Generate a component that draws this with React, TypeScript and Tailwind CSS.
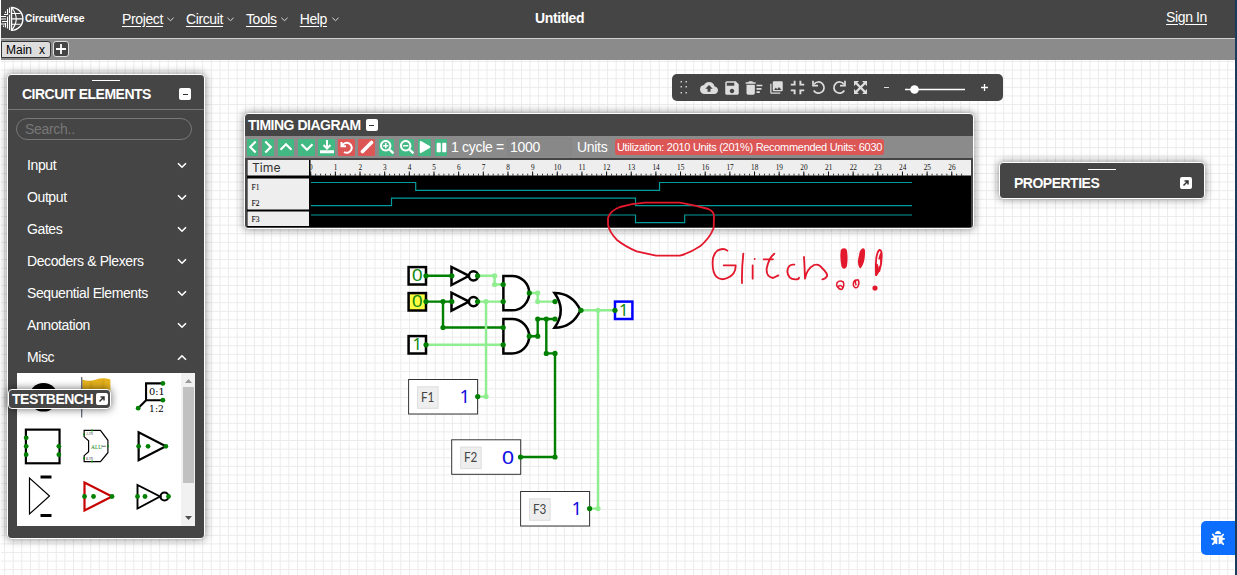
import React from "react";
import { FaBug, FaPause, FaPlay, FaSearchMinus, FaSearchPlus } from "react-icons/fa";
import { MdCloudUpload, MdDeleteSweep, MdFullscreenExit, MdPhotoLibrary, MdSave } from "react-icons/md";

const FONT = "font-['Liberation_Sans',Arial,sans-serif]";
const DARK = "#008000";
const LIGHT = "#90ee90";

function Logo() {
  return (
    <div className="flex items-center">
      <svg width="23" height="28" viewBox="0 0 23 28" fill="none" stroke="#fff" strokeWidth="1.1">
        <path d="M10.5 2.5A11.2 11.2 0 0 1 10.5 25.3Z" strokeWidth="1.4" />
        <path d="M10.5 2.5Q20 13.9 10.5 25.3M10.5 8.5H19.5M10.5 13.9H21.5M10.5 19.3H19.5" />
        <path d="M8.5 2.5V8M6.5 4V9.5H3M8.5 9.5V25M6.5 11.5V23.5M0 11.5H5M0 14H5M1 16.5H6M4.5 6.5V8M0 19H4M4.5 18V22.5M2.5 20.5V22" />
      </svg>
      <span className="ml-px font-['Inter',sans-serif] text-[9.8px] font-bold text-white">CircuitVerse</span>
    </div>
  );
}

function Header() {
  return (
    <header className="flex h-[38px] shrink-0 bg-[#454545] text-[14px] tracking-[-0.38px] text-white">
      <div className="flex w-[121px] items-center tracking-normal">
        <Logo />
      </div>
      <nav className="flex w-[413px] items-center gap-[11.5px] pt-px">
        {["Project", "Circuit", "Tools", "Help"].map((m) => (
          <span key={m} className="flex items-center gap-[4.5px]">
            <span className="underline underline-offset-2">{m}</span>
            <svg width="7" height="5" viewBox="0 0 7 5" fill="none" stroke="#ddd" strokeWidth="1">
              <path d="M0.4 0.8 3.5 3.7 6.6 0.8" />
            </svg>
          </span>
        ))}
      </nav>
      <div className="flex-1 pt-[9px] leading-[18px] font-bold">Untitled</div>
      <a className="mr-[28px] pt-2 leading-[18px] underline underline-offset-2">Sign In</a>
    </header>
  );
}

function TabBar() {
  return (
    <div className="flex h-[22px] shrink-0 items-start border-t border-[#d0d0d0] bg-[#8b8b8b] pt-[2px]">
      <div className="flex h-[17px] w-[50px] items-center justify-between rounded-r-[3px] border border-[#333] bg-[#ddd] pr-[5px] pl-1 text-[12px] text-black">
        <span>Main</span>
        <span>x</span>
      </div>
      <div className="ml-[2px] flex size-[16px] items-center justify-center rounded-[3px] border border-[#ddd] bg-[#454545]">
        <svg width="10" height="10" viewBox="0 0 10 10" stroke="#fff" strokeWidth="1.8">
          <path d="M5 0V10M0 5H10" />
        </svg>
      </div>
    </div>
  );
}

function Wire({ d, on }: { d: string; on?: boolean }) {
  return <path d={d} fill="none" stroke={on ? LIGHT : DARK} strokeWidth="2.4" />;
}

function Dots({ pts, on }: { pts: number[][]; on?: boolean }) {
  return (
    <g fill={on ? LIGHT : DARK}>
      {pts.map(([x, y]) => (
        <circle key={`${x}-${y}`} cx={x} cy={y} r="2.6" />
      ))}
    </g>
  );
}

function Bit({ x, y, v, fill, stroke = "#000" }: { x: number; y: number; v: string; fill: string; stroke?: string }) {
  const w = v === "0" ? 11 : 9.5;
  return (
    <g>
      <rect x={x - 8.7} y={y - 8.7} width="17.4" height="17.4" fill={fill} stroke={stroke} strokeWidth="2.5" />
      <text
        x={x - w / 2}
        y={y + 5.5}
        fontSize="16"
        fontFamily="'Noto Sans',sans-serif"
        fill="#118811"
        textLength={w}
        lengthAdjust="spacingAndGlyphs"
      >
        {v}
      </text>
    </g>
  );
}

function Flag({ x, y, name, v }: { x: number; y: number; name: string; v: string }) {
  return (
    <g fontFamily="'Noto Sans',sans-serif">
      <rect x={x} y={y} width="69" height="34.5" fill="#fff" stroke="#333" strokeWidth="1" />
      <rect x={x + 9} y={y + 7.3} width="20.5" height="21.5" fill="#eee" stroke="#ddd" strokeWidth="1" />
      <text
        x={x + 12.3}
        y={y + 22}
        fontSize="12.5"
        fill="#444"
        fontFamily="Lato,sans-serif"
        textLength="13.4"
        lengthAdjust="spacingAndGlyphs"
      >
        {name}
      </text>
      <text
        x={v === "0" ? x + 50 : x + 51}
        y={y + 23.8}
        fontSize="18"
        fill="#1010e0"
        textLength={v === "0" ? 12.5 : 10.5}
        lengthAdjust="spacingAndGlyphs"
      >
        {v}
      </text>
    </g>
  );
}

function CircuitCanvas() {
  return (
    <svg className="block" width="1233" height="515" viewBox="1 60 1233 515">
      <defs>
        <pattern id="grid" x="4.1" y="0.7" width="8.614" height="8.614" patternUnits="userSpaceOnUse">
          <path d="M0 0.5H8.7M0.5 0V8.7" stroke="#ebebeb" strokeWidth="1" fill="none" />
        </pattern>
      </defs>
      <rect x="1" y="60" width="1233" height="515" fill="#fff" />
      <rect x="1" y="60" width="1233" height="515" fill="url(#grid)" />

      <g fill="#fff" stroke="#000" strokeWidth="2.5">
        <path d="M451.5 267V285L469 275.8Z" />
        <path d="M451.5 292.7V310.7L469 301.6Z" />
        <circle cx="473.5" cy="275.8" r="4.6" />
        <circle cx="473.5" cy="301.6" r="4.6" />
        <path d="M503.4 275.9H512A17.2 17.2 0 0 1 512 310.3H503.4Z" />
        <path d="M503.4 319H512A17.2 17.2 0 0 1 512 353.4H503.4Z" />
        <path d="M554.5 293C567 293 575 299 580.5 310.3C575 322 567 327.8 554.5 327.8Q567 310.3 554.5 293Z" />
      </g>

      <Wire d="M426 275.8H451.5M426 301.6H451.5M443 301.6V327.5H503" />
      <Wire d="M529 336.2H537.7V319H555M546.3 319V353.4H555V457H520.5" />
      <Wire on d="M477.6 275.8H494.6V284.5H503M477.6 301.6H503M486 301.6V396.6H478" />
      <Wire on d="M426 344.8H503M529 293H537.7V301.6H555M581 310.3H615M598 310.3V508.6H589.5" />
      <Dots on pts={[[494.6, 275.8], [494.6, 284.5], [486, 301.6], [486, 396.6], [537.7, 293], [537.7, 301.6], [598, 310.3], [598, 508.6]]} />

      <Bit x={417.3} y={275.8} v="0" fill="#fff" />
      <Bit x={417.3} y={301.8} v="0" fill="#ffff44" />
      <Bit x={417.3} y={344.8} v="1" fill="#fff" />
      <Bit x={623.7} y={310.3} v="1" fill="#fff" stroke="#0000ff" />
      <Flag x={408.6} y={379.5} name="F1" v="1" />
      <Flag x={451.7} y={439.8} name="F2" v="0" />
      <Flag x={520.6} y={491.5} name="F3" v="1" />
      <Dots
        pts={[
          [426, 275.8], [426, 301.6], [426, 344.8], [451.8, 275.8], [451.8, 301.6], [443, 301.6], [443, 327.5],
          [477.6, 275.8], [477.6, 301.6], [503.2, 284.5], [503.2, 301.6], [503.2, 327.5], [503.2, 344.8],
          [529.3, 293], [529.3, 336.2], [537.7, 336.2], [537.7, 319], [546.3, 319], [555, 319], [555, 301.6],
          [546.3, 353.4], [555, 353.4], [581, 310.3], [615, 310.3], [555, 457], [520.5, 457], [477.7, 396.6], [589.6, 508.6],
        ]}
      />
    </svg>
  );
}

function CollapseBox() {
  return (
    <span className="flex size-[12px] items-center justify-center rounded-[2px] bg-white">
      <span className="h-px w-[5px] bg-[#333]" />
    </span>
  );
}

function ExpandBox() {
  return (
    <span className="flex size-[12px] shrink-0 items-center justify-center rounded-[2px] bg-white">
      <svg width="8" height="8" viewBox="0 0 8 8" fill="none" stroke="#333" strokeWidth="1.5">
        <path d="M1.5 6.5 5.5 2.5M2.5 2H6V5.5" />
      </svg>
    </span>
  );
}

function Pins({ pts, r = 2.4 }: { pts: number[][]; r?: number }) {
  return (
    <g fill={DARK} stroke="none">
      {pts.map(([x, y]) => (
        <circle key={`${x}-${y}`} cx={x} cy={y} r={r} />
      ))}
    </g>
  );
}

function MiscItems() {
  const cell = "block size-full";
  return (
    <div className="grid flex-1 grid-cols-[54px_54px_54px] grid-rows-[49.5px_49.5px_50px]">
      <svg className={cell} viewBox="0 0 54 50">
        <circle cx="26.5" cy="24.5" r="14.5" />
      </svg>
      <svg className={cell} viewBox="0 0 54 50">
        <path d="M11 6.500Q18 9 25 6.500T39.500 6.500V27Q32 26 25 28T11 27Z" fill="#e6b31e" />
        <path d="M20 8V28M32 6V27" stroke="#d5a313" strokeWidth="3" opacity=".5" />
        <path d="M10.500 4V45" stroke="#6b7080" strokeWidth="1.400" />
      </svg>
      <svg className={cell} viewBox="0 0 54 50" fill="none" stroke="#000" strokeWidth="2.100">
        <path d="M37.500 10.500H21V27.500H37.500M21 27.500 13 35.500" />
        <Pins pts={[[38, 10.5], [38, 27.5], [13, 35.5]]} />
        <g fill="#000" stroke="none" fontFamily="'DejaVu Serif',serif" fontSize="9.500">
          <text x="24" y="22.500" textLength="16" lengthAdjust="spacingAndGlyphs">0:1</text>
          <text x="24" y="39" textLength="15" lengthAdjust="spacingAndGlyphs">1:2</text>
        </g>
      </svg>
      <svg className={cell} viewBox="0 0 54 50" fill="none" stroke="#000" strokeWidth="2.200">
        <rect x="8.700" y="7.700" width="34" height="34" />
        <Pins pts={[[9, 16], [9, 24.5], [9, 33], [42, 24.5], [42, 33]]} />
      </svg>
      <svg className={cell} viewBox="0 0 54 50" fill="none" stroke="#000" strokeWidth="1.200">
        <path d="M13 8.500H29.500L37 18.500V31L29.500 40H13V34L17.500 30V19L13 15Z" />
        <Pins r={1} pts={[[21, 8.5], [21, 40], [13, 12.5], [13, 36.5], [37, 24.5]]} />
        <text x="20" y="27" fontSize="5.500" fill={DARK} stroke="none" fontFamily="'Liberation Serif',serif">ALU</text>
        <text x="15" y="13.500" fontSize="3.500" fill="#333" stroke="none" fontFamily="'Liberation Serif',serif">A IN</text>
        <text x="15" y="38" fontSize="3.500" fill="#333" stroke="none" fontFamily="'Liberation Serif',serif">B IN</text>
        <path d="M31 24.500H35" strokeWidth=".6" />
      </svg>
      <svg className={cell} viewBox="0 0 54 50" fill="none" stroke="#000" strokeWidth="2.200">
        <path d="M13.500 10.500V38.500L41 24.500Z" />
        <Pins pts={[[13.5, 24.5], [23, 24.5], [41, 24.5]]} />
      </svg>
      <svg className={cell} viewBox="0 0 54 50" fill="none" stroke="#000" strokeWidth="1.200">
        <path d="M12.500 6V42L32.500 24Z" />
        <path d="M23.500 5H34.500M23.500 43.500H34.500" strokeWidth="3" />
      </svg>
      <svg className={cell} viewBox="0 0 54 50" fill="none" stroke="#c80000" strokeWidth="2.200">
        <path d="M13.500 10.500V38.500L41 24.500Z" />
        <Pins pts={[[13.5, 24.5], [22.5, 24.5], [41, 24.5]]} />
      </svg>
      <svg className={cell} viewBox="0 0 54 50" fill="none" stroke="#000" strokeWidth="1.900">
        <path d="M12.500 13V36.500L35 24.500Z" />
        <circle cx="39.500" cy="24.500" r="4" strokeWidth="2.200" />
        <Pins pts={[[12.5, 24.5], [20, 24.5], [43.5, 24.5]]} />
      </svg>
    </div>
  );
}

function ElementsPanel() {
  const rows = ["Input", "Output", "Gates", "Decoders & Plexers", "Sequential Elements", "Annotation", "Misc"];
  return (
    <aside className="absolute top-[74px] left-[7px] flex h-[465px] w-[198px] flex-col rounded-[4px] border border-white bg-[#454545] text-white shadow-[0_0_8px_rgba(0,0,0,0.5)]">
      <div className="flex h-[35px] shrink-0 flex-col border-b border-[#777]">
        <div className="mt-[5px] ml-[84px] h-px w-[28px] bg-white" />
        <div className="mt-[5px] flex items-center justify-between pr-[13px] pl-[14px]">
          <span className="text-[14px] leading-[16px] font-bold tracking-[-0.5px]">CIRCUIT ELEMENTS</span>
          <CollapseBox />
        </div>
      </div>
      <div className="mx-2 mt-2 mr-3 flex h-[22px] shrink-0 items-center rounded-full border border-[#777] pl-2 text-[14px] tracking-[-0.3px] text-[#777]">
        Search..
      </div>
      <div className="mt-[9px] flex flex-col">
        {rows.map((r, i) => (
          <div key={r} className="flex h-[32.1px] items-center justify-between pr-[17px] pl-[19px] text-[14px] tracking-[-0.4px]">
            <span>{r}</span>
            <svg
              className={i === 6 ? "rotate-180" : ""}
              width="10"
              height="7"
              viewBox="0 0 10 7"
              fill="none"
              stroke="#fff"
              strokeWidth="1.6"
            >
              <path d="M1 1.200 5 5.200 9 1.200" />
            </svg>
          </div>
        ))}
      </div>
      <div className="mx-[9px] -mt-px flex h-[153px] bg-white">
        <MiscItems />
        <div className="flex w-[14px] flex-col items-center bg-[#f1f1f1] py-[6px]">
          <svg width="7" height="4" viewBox="0 0 7 4" fill="#999">
            <path d="M0 4 3.500 0 7 4Z" />
          </svg>
          <div className="mt-1 h-[96px] w-[11px] bg-[#c1c1c1]" />
          <svg className="mt-auto" width="7" height="4" viewBox="0 0 7 4" fill="#505050">
            <path d="M0 0 3.500 4 7 0Z" />
          </svg>
        </div>
      </div>
    </aside>
  );
}

function TestBench() {
  return (
    <div className="absolute top-[389px] left-[8px] flex h-[20px] w-[103px] items-center gap-[3px] rounded-[4px] border border-white bg-[#454545] pl-[3px] text-white shadow-[0_0_8px_rgba(0,0,0,0.6)]">
      <span className="text-[14px] leading-[16px] font-bold tracking-[-0.5px]">TESTBENCH</span>
      <ExpandBox />
    </div>
  );
}

function PropertiesPanel() {
  return (
    <div className="absolute top-[162px] left-[999px] flex h-[37px] w-[206px] flex-col rounded-[4px] border border-white bg-[#454545] text-white shadow-[0_0_8px_rgba(0,0,0,0.5)]">
      <div className="mt-[6px] ml-[88px] h-px w-[28px] bg-white" />
      <div className="mt-[5px] flex items-center justify-between pr-3 pl-[14px]">
        <span className="text-[14px] leading-[16px] font-bold tracking-[-0.5px]">PROPERTIES</span>
        <ExpandBox />
      </div>
    </div>
  );
}

function RotateArrow({ flip }: { flip?: boolean }) {
  return (
    <svg className={flip ? "-scale-x-100" : ""} width="14" height="15" viewBox="0 0 14 15" fill="none" stroke="currentColor" strokeWidth="1.700">
      <path d="M2 4.200A5.600 5.600 0 1 1 1.700 10.500" />
      <path d="M1 .8V5.700H6" />
    </svg>
  );
}

function QuickBar() {
  return (
    <div className="absolute top-[74px] left-[672px] flex h-[27px] w-[331px] items-center rounded-[5px] bg-[#454545] pl-[7px] text-[#ddd]">
      <svg width="9" height="15" viewBox="0 0 9 15" fill="#ccc">
        {[1, 6, 12].map((y) => (
          <path key={y} d={`M1.500 ${y}h1.500v1.500h-1.500zM6.500 ${y}h1.500v1.500h-1.500z`} />
        ))}
      </svg>
      <MdCloudUpload className="ml-[12px]" size={18} />
      <MdSave className="ml-[5px]" size={18} />
      <MdDeleteSweep className="ml-[3px]" size={20} />
      <MdPhotoLibrary className="ml-[5px]" size={15} />
      <MdFullscreenExit className="ml-[2px]" size={23} />
      <span className="ml-[3px]"><RotateArrow /></span>
      <span className="ml-[6px]"><RotateArrow flip /></span>
      <svg className="ml-[8px]" width="13" height="13" viewBox="0 0 13 13" fill="currentColor">
        <path d="M0 0H5L0 5ZM13 0H8L13 5ZM0 13H5L0 8ZM13 13H8L13 8Z" />
        <path d="M2 2 11 11M11 2 2 11" stroke="currentColor" strokeWidth="2.400" />
      </svg>
      <span className="ml-[17px] h-[1.5px] w-[5px] bg-[#ddd]" />
      <svg className="ml-[16px]" width="60" height="12" viewBox="0 0 60 12">
        <path d="M0 7.500H60" stroke="#fff" strokeWidth="1.300" />
        <circle cx="9.500" cy="7.500" r="4.300" fill="#fff" />
      </svg>
      <svg className="ml-[16px]" width="7" height="7" viewBox="0 0 7 7" stroke="#fff" strokeWidth="1.300">
        <path d="M3.500 0V7M0 3.500H7" />
      </svg>
    </div>
  );
}

function TimingPlot() {
  const majors = Array.from({ length: 27 }, (_, i) => i);
  const minors = Array.from({ length: 133 }, (_, i) => i);
  const serif = "'Liberation Serif',serif";
  return (
    <svg className="block" width="724" height="67" viewBox="247 160 724 67">
      <rect x="247" y="160" width="724" height="67" fill="#000" />
      <g fill="#eee">
        <rect x="247.500" y="160" width="61.500" height="15.500" />
        <rect x="310.500" y="160" width="660.500" height="15.500" />
        <rect x="247.500" y="178.500" width="61.500" height="31" />
        <rect x="247.500" y="211.500" width="61.500" height="14.500" />
      </g>
      <text x="252" y="171.500" fontFamily="Inter,sans-serif" fontSize="12" fill="#333" textLength="28.500" lengthAdjust="spacingAndGlyphs">
        Time
      </text>
      <g fontFamily={serif} fontSize="7.500" fill="#111" stroke="#111" strokeWidth=".1">
        <text x="251.500" y="190">F1</text>
        <text x="251.500" y="205.500">F2</text>
        <text x="251.500" y="222">F3</text>
      </g>
      {minors.map((i) => (
        <rect key={i} x={310.3 + i * 4.931} y="173.700" width=".9" height="2" fill="#222" />
      ))}
      {majors.map((i) => (
        <g key={i}>
          <rect x={310.2 + i * 24.656} y="171.500" width="1" height="4.500" fill="#111" />
          <text x={310.9 + i * 24.656} y="170.300" fontSize="7.300" fontFamily={serif} textAnchor="middle" fill="#111">
            {i}
          </text>
        </g>
      ))}
      <g fill="none" stroke="#009c9c" strokeWidth="1.200">
        <path d="M311 182.500H415.700V190.300H659.500V182.500H912" />
        <path d="M311 205.600H391.500V198.200H635.500V205.600H912" />
        <path d="M311 215H635.500V222.600H684.700V215H912" />
      </g>
    </svg>
  );
}

function Chevron({ turn }: { turn: string }) {
  return (
    <svg className={`${turn} shrink-0`} width="14" height="14" viewBox="0 0 14 14" fill="none" stroke="#fff" strokeWidth="2.200">
      <path d="M1.500 4.300 7 9.800 12.500 4.300" />
    </svg>
  );
}

function TimingPanel() {
  const green = "flex h-[17px] shrink-0 items-center justify-center overflow-hidden rounded-[1px] bg-[#42b983]";
  const red = "flex size-[17px] shrink-0 items-center justify-center rounded-[1px] bg-[#dc5656]";
  return (
    <section className="absolute top-[113px] left-[244px] flex h-[116px] w-[730px] flex-col rounded-[4px] border border-white bg-[#454545] text-white shadow-[0_0_8px_rgba(0,0,0,0.5)]">
      <div className="flex h-[22px] shrink-0 items-center gap-[5px] pl-[3px]">
        <span className="text-[14px] leading-[16px] font-bold tracking-[-0.5px]">TIMING DIAGRAM</span>
        <CollapseBox />
      </div>
      <div className="flex h-[22px] shrink-0 items-center bg-[#8b8b8b] pl-[2px] text-[14px] tracking-[-0.3px]">
        <span className={`${green} w-[11px]`}><Chevron turn="rotate-90" /></span>
        <span className={`${green} ml-1 w-[12px]`}><Chevron turn="-rotate-90" /></span>
        <span className={`${green} ml-[4px] w-[16px]`}><Chevron turn="rotate-180" /></span>
        <span className={`${green} ml-[4px] w-[17px]`}><Chevron turn="rotate-0" /></span>
        <span className={`${green} ml-[3px] w-[17px]`}>
          <svg width="14" height="14" viewBox="0 0 14 14" fill="none" stroke="#fff" strokeWidth="2">
            <path d="M7 0V8M3.500 5 7 8.500 10.500 5" />
            <path d="M0 11.700H14" strokeWidth="3" />
          </svg>
        </span>
        <span className={`${red} ml-[3px]`}>
          <svg width="13" height="13" viewBox="0 0 13 13" fill="none" stroke="#fff" strokeWidth="2">
            <path d="M1.500 1V5.200H6M2.200 4.700A5 5 0 1 1 4 11" />
          </svg>
        </span>
        <span className={`${red} ml-[3px]`}>
          <svg width="14" height="14" viewBox="0 0 14 14">
            <path d="M2.500 11.500 11.500 2.500" stroke="#fff" strokeWidth="3.600" strokeLinecap="round" />
          </svg>
        </span>
        <span className={`${green} ml-[4px] w-[15px]`}><FaSearchPlus size={14} /></span>
        <span className={`${green} ml-[5px] w-[15px]`}><FaSearchMinus size={14} /></span>
        <span className={`${green} ml-[4px] w-[13px]`}><FaPlay size={12} /></span>
        <span className={`${green} ml-[4px] w-[12px]`}><FaPause size={11} /></span>
        <span className="ml-[4px] w-[56px] shrink-0 whitespace-nowrap">1 cycle =</span>
        <span className="flex h-[18px] w-[65px] shrink-0 items-center border border-[#858585] bg-[#888] pl-[2px]">1000</span>
        <span className="ml-[5px] w-[31px] shrink-0">Units</span>
        <span className="ml-[7px] flex h-[16px] w-[269px] shrink-0 items-center justify-center rounded-[3px] bg-[#dc5656] text-[11px] tracking-[-0.3px] whitespace-nowrap">
          Utilization: 2010 Units (201%) Recommended Units: 6030
        </span>
      </div>
      <div className="mt-[2px] ml-[2px]">
        <TimingPlot />
      </div>
    </section>
  );
}

function Annotation() {
  return (
    <svg
      className="pointer-events-none absolute top-[190px] left-[600px]"
      width="300"
      height="110"
      viewBox="0 246 900 330"
      fill="none"
      stroke="#e3182d"
      strokeWidth="5.500"
      strokeLinecap="round"
      strokeLinejoin="round"
    >
      <path d="M24 350V330Q30 308 60 297Q95 287 135 284H240L285 293L325 303Q342 310 342 325L341 360Q330 390 300 415Q270 435 240 443H168L110 430Q75 415 50 395Q28 372 24 350" />
      <path d="M382 428Q370 418 352 428Q338 440 338 462Q337 493 349 506Q362 519 382 510Q408 499 407 472H371" />
      <path d="M430 437Q425 480 426 525M458 472V512M464 453V453" />
      <path d="M523 437Q506 450 500 482Q498 507 519 510L535 502M491 454H519" />
      <path d="M583 470Q564 467 562 490Q564 514 586 514Q597 514 597 509" />
      <path d="M612 447Q614 480 615 512Q620 483 642 471Q657 466 666 480Q684 497 681 505Q675 514 667 514" />
      <g fill="#e3182d">
        <path d="M725 427Q732 421 738 427Q742 451 738 474Q732 485 727 474Q722 450 725 427Z" />
        <path d="M782 431Q789 419 792 426Q794 460 781 478Q775 470 777 455Z" />
        <path d="M831 470 829 501 836 490Z" />
        <circle cx="825" cy="540" r="5" />
      </g>
      <path d="M828 501Q825 437 838 426Q846 425 845 446Q845 470 838 489M838 452Q841 440 843 436L843 470L836 484" />
      <path d="M729 539Q720 527 714 538Q717 546 726 544Q734 534 730 522Q719 515 711 524Q707 537 720 542" strokeWidth="4.500" />
      <path d="M768 530Q762 515 774 515Q780 524 773 537Q764 544 760 531Q759 519 768 516" strokeWidth="4.500" />
    </svg>
  );
}

export default function App() {
  return (
    <div className={`relative flex h-[575px] w-[1237px] overflow-hidden bg-white pl-px ${FONT}`}>
      <div className="flex w-[1234px] shrink-0 flex-col">
        <Header />
        <TabBar />
        <CircuitCanvas />
      </div>
      <div className="w-[2px] shrink-0 bg-[#1c3a5c]" />
      <ElementsPanel />
      <TestBench />
      <QuickBar />
      <TimingPanel />
      <PropertiesPanel />
      <Annotation />
      <button className="absolute top-[521px] left-[1201px] flex h-[34px] w-[34px] items-center justify-center rounded-l-[5px] bg-[#0d6efd] text-white">
        <FaBug size={14} />
      </button>
    </div>
  );
}
